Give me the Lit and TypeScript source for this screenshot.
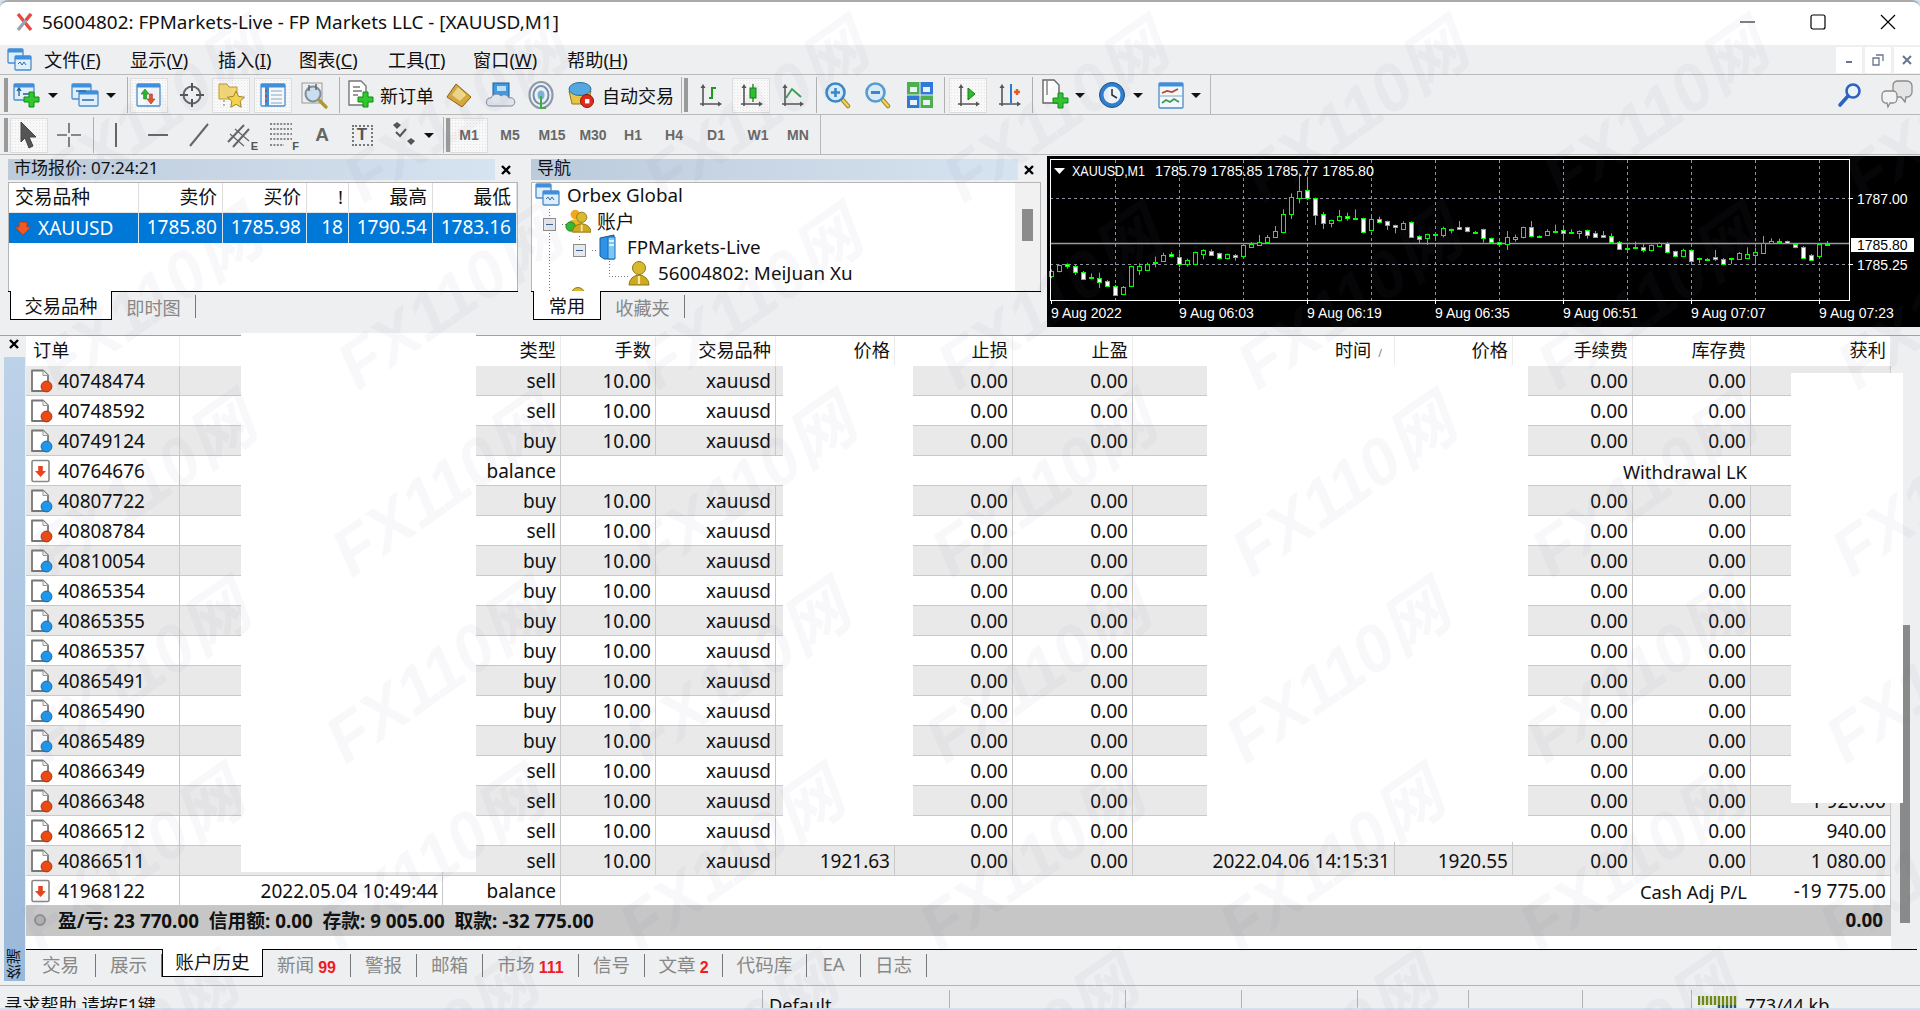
import { LitElement, html, css, svg, nothing } from 'lit';
import { customElement } from 'lit/decorators.js';

// ---- icons ----
const ic = (w: number, h: number, body: unknown) =>
  html`<svg width=${w} height=${h} viewBox="0 0 ${w} ${h}">${body}</svg>`;

const plus = (x: number, y: number) => svg`
  <path d="M${x + 5} ${y}h5v5h5v5h-5v5h-5v-5h-5v-5h5z" fill="#2fc82f" stroke="#128a12" stroke-width="1"/>`;

const miniWin = (x: number, y: number, w: number, h: number, fill = '#dfeefb') => svg`
  <rect x=${x} y=${y} width=${w} height=${h} rx="1" fill=${fill} stroke="#4a8ccb" stroke-width="1.3"/>
  <rect x=${x} y=${y} width=${w} height="3.5" fill="#3f8fdc"/>`;

const axes = (x = 4, y = 3) => svg`
  <g stroke="#555" stroke-width="1.6" fill="#555">
    <path d="M${x + 3} ${y + 3}V${y + 22}M${x} ${y + 20}H${x + 20}" fill="none"/>
    <path d="M${x + 3} ${y}l-2.5 4h5z" stroke="none"/>
    <path d="M${x + 22} ${y + 20}l-4 -2.5v5z" stroke="none"/>
  </g>`;

const mag = (color: string, inner: unknown) => ic(28, 28, svg`
  <path d="M17 17l7 8" stroke="#a58a22" stroke-width="4.5" stroke-linecap="round"/>
  <path d="M17 17l7 8" stroke="#ecd35a" stroke-width="2.4" stroke-linecap="round"/>
  <circle cx="11.5" cy="11.5" r="9" fill="#d8ecf8" stroke=${color} stroke-width="2.6"/>
  ${inner}`);

const icons = {
  newChart: () => ic(30, 28, svg`${miniWin(2, 3, 20, 16)}
    <path d="M7 8v7M5 10l2-3 2 3M11 13h7" stroke="#1f5f8f" stroke-width="1.3" fill="none"/>${plus(12, 11)}`),
  profile: () => ic(30, 28, svg`${miniWin(2, 3, 19, 15)}${miniWin(9, 10, 19, 15)}
    <path d="M6 10h10M12 19h12" stroke="#2b6ea5" stroke-width="1.3"/>`),
  market: () => ic(28, 28, svg`${miniWin(2, 3, 23, 22, '#f4f9fd')}
    <path d="M10 8l-4 5h2.6v5h3v-5H14z" fill="#2bb52b" stroke="#157a15" stroke-width=".6"/>
    <path d="M16 23l4-5h-2.6v-5h-3v5H12z" fill="#e8542a" stroke="#a53312" stroke-width=".6"/>`),
  target: () => ic(28, 28, svg`
    <circle cx="14" cy="14" r="8.5" fill="none" stroke="#666" stroke-width="2"/>
    <path d="M14 2v8M14 18v8M2 14h8M18 14h8" stroke="#555" stroke-width="2"/>`),
  navStar: () => ic(30, 30, svg`
    <path d="M3 4h8l2 3h8v12H3z" fill="#f4d774" stroke="#b89b32"/>
    <path d="M20 11l2.6 5.4 5.9.8-4.3 4.1 1 5.9-5.2-2.8-5.2 2.8 1-5.9-4.3-4.1 5.9-.8z" fill="#f2d24e" stroke="#9c8526"/>
    <path d="M8 20v8" stroke="#777" stroke-dasharray="2 2"/>`),
  terminal: () => ic(28, 28, svg`${miniWin(2, 3, 24, 22, '#f6f8fb')}
    <path d="M8 6v19" stroke="#3f8fdc" stroke-width="4"/>
    <path d="M12 10h11M12 14h11M12 18h11M12 22h11" stroke="#8aa6c4" stroke-width="1.2"/>
    <path d="M6 10h2M6 15h2M6 20h2" stroke="#d33" stroke-width="1.4"/>`),
  tester: () => ic(30, 30, svg`
    <rect x="3" y="3" width="20" height="20" fill="#eee" stroke="#999"/>
    <circle cx="14" cy="14" r="7.5" fill="#c9deee" stroke="#7d8ea0" stroke-width="2"/>
    <path d="M10 5v6M17 4v6" stroke="#666" stroke-width="1.5"/>
    <path d="M20 20l7 7" stroke="#b5962a" stroke-width="3.4" stroke-linecap="round"/>`),
  newOrder: () => ic(30, 32, svg`
    <path d="M3 2h12l5 5v19H3z" fill="#fff" stroke="#777" stroke-width="1.4"/>
    <path d="M7 8h7M7 12h9M7 16h5" stroke="#777" stroke-width="1.3"/>${plus(12, 13)}`),
  gold: () => ic(28, 26, svg`
    <path d="M2 15L11 2l15 13-9 10z" fill="#d8a93a" stroke="#85631a"/>
    <path d="M7 13l6-8 8 8-6 6z" fill="#f3d98a"/>`),
  cloud: () => ic(30, 28, svg`
    <rect x="7" y="2" width="16" height="18" fill="#3f9ae6" stroke="#1d5f9e"/>
    <rect x="11" y="5" width="9" height="5" fill="#bfe3fb"/>
    <path d="M4 25a4 4 0 0 1 1-8 6 6 0 0 1 10-2 5 5 0 0 1 8 2 4 4 0 0 1 3 8z" fill="#dfe3ea" stroke="#7d8798"/>`),
  radar: () => ic(28, 30, svg`
    <ellipse cx="14" cy="15" rx="11.5" ry="13" fill="none" stroke="#8d99a8" stroke-width="2.2"/>
    <ellipse cx="14" cy="15" rx="7.5" ry="9" fill="none" stroke="#6f8fb0" stroke-width="2"/>
    <ellipse cx="14" cy="15" rx="3.5" ry="4.5" fill="#7fb0d8"/>
    <path d="M14 16v12h5" fill="none" stroke="#3fae3f" stroke-width="2"/>`),
  auto: () => ic(30, 30, svg`
    <path d="M3 11h22l-3 13H6z" fill="#e6c544" stroke="#93791c"/>
    <ellipse cx="14" cy="9" rx="11" ry="6.5" fill="#55a7e0" stroke="#2a6f9f"/>
    <circle cx="21" cy="21" r="6.5" fill="#e02a1d" stroke="#8f160e"/>
    <rect x="19" y="19" width="4.4" height="4.4" fill="#fff"/>`),
  bars: () => ic(28, 28, svg`${axes()}<path d="M16 6v12M16 7h4M13 17h3" stroke="#1c9a1c" stroke-width="2" fill="none"/>`),
  candles: () => ic(28, 28, svg`${axes()}
    <path d="M16 3v18" stroke="#1c8a1c" stroke-width="1.4"/><rect x="13" y="7" width="6" height="10" fill="#27c227" stroke="#167c16"/>`),
  line: () => ic(28, 28, svg`${axes()}<path d="M8 17l6-9 9 8" fill="none" stroke="#3a9a55" stroke-width="1.8"/>`),
  zoomIn: () => mag('#3e87c6', svg`<path d="M11.5 7v9M7 11.5h9" stroke="#3e87c6" stroke-width="2.6"/>`),
  zoomOut: () => mag('#5a9bd0', svg`<path d="M7 11.5h9" stroke="#3e87c6" stroke-width="2.8"/>`),
  tile: () => ic(28, 28, svg`
    <rect x="1" y="1" width="12.5" height="12.5" fill="#4cb04c"/><rect x="14.5" y="1" width="12.5" height="12.5" fill="#2f79d8"/>
    <rect x="1" y="14.5" width="12.5" height="12.5" fill="#2f79d8"/><rect x="14.5" y="14.5" width="12.5" height="12.5" fill="#4cb04c"/>
    <path d="M4 6h7v5H4zM17 6h7v5h-7zM4 19h7v5H4zM17 19h7v5h-7z" fill="#e9f2f8"/>`),
  scroll: () => ic(28, 28, svg`${axes()}<path d="M14 7l7 6-7 6z" fill="#2cbd2c" stroke="#167c16"/>`),
  shift: () => ic(28, 28, svg`${axes()}
    <path d="M16 3v19" stroke="#2f79c8" stroke-width="2"/><path d="M19 11h6M22 8v6" stroke="#e25a24" stroke-width="2.4"/>`),
  indicators: () => ic(30, 34, svg`
    <path d="M2 2h11l5 5v18H2z" fill="#fff" stroke="#666" stroke-width="1.4"/>
    <path d="M6 3v14" stroke="#666" stroke-width="1.2"/>${plus(12, 15)}`),
  clock: () => ic(28, 30, svg`
    <circle cx="14" cy="15" r="12.5" fill="#2f7fd0" stroke="#1c4f88"/>
    <circle cx="14" cy="15" r="8.5" fill="#eef3f8"/>
    <path d="M14 9v6l5 3" fill="none" stroke="#333" stroke-width="1.6"/>`),
  template: () => ic(28, 28, svg`${miniWin(2, 2, 24, 25, '#f3f6fa')}
    <path d="M5 12l5-2 5 1 6-3" fill="none" stroke="#b6482a" stroke-width="1.7"/>
    <path d="M2 15h24" stroke="#8aa6c4"/>
    <path d="M5 22l4-3 4 2 4-3 5 3" fill="none" stroke="#3a9a55" stroke-width="1.7"/>`),
  search: () => ic(26, 28, svg`
    <circle cx="16" cy="10" r="6.5" fill="#e9f3fb" stroke="#2e62c0" stroke-width="2.6"/>
    <path d="M11 15l-8 9" stroke="#2e62c0" stroke-width="3.6" stroke-linecap="round"/>`),
  chat: () => ic(34, 30, svg`
    <path d="M13 5a5 5 0 0 1 5-4h9a5 5 0 0 1 5 5v6a5 5 0 0 1-5 5h-1l-1 5-4-5h-3a5 5 0 0 1-5-5z" fill="#e4e4e4" stroke="#8b8b8b" stroke-width="1.3"/>
    <path d="M2 15a4 4 0 0 1 4-4h7a4 4 0 0 1 4 4v4a4 4 0 0 1-4 4h-3l-2 4-1-4a4 4 0 0 1-5-4z" fill="#f2f2f2" stroke="#8b8b8b" stroke-width="1.3"/>`),
  cursor: () => ic(22, 30, svg`<path d="M3 2l15 15h-7l4 9-4 2-4-10-4 4z" fill="#555" stroke="#444"/>`),
  cross: () => ic(26, 26, svg`<path d="M13 1v10M13 15v10M1 13h10M15 13h10" stroke="#666" stroke-width="1.6"/>`),
  vline: () => ic(10, 28, svg`<path d="M5 2v24" stroke="#666" stroke-width="2"/>`),
  hline: () => ic(24, 10, svg`<path d="M2 5h20" stroke="#666" stroke-width="2"/>`),
  trend: () => ic(24, 26, svg`<path d="M3 24L21 2" stroke="#666" stroke-width="2"/>`),
  channel: () => html`<span class="with-tag">${ic(26, 26, svg`
    <path d="M2 20L18 3M7 25L23 7" stroke="#666" stroke-width="2"/><path d="M4 12l14 12M9 7l14 12" stroke="#666" stroke-width="1.2"/>`)}<b>E</b></span>`,
  fib: () => html`<span class="with-tag">${ic(24, 26, svg`
    <path d="M1 2h22M1 7h22M1 12h22M1 17h22M1 23h14" stroke="#666" stroke-width="1.6" stroke-dasharray="2 1.4"/>`)}<b>F</b></span>`,
  textBox: () => html`<span class="tbox">T</span>`,
  arrows: () => ic(28, 28, svg`
    <path d="M3 4l4-3 4 3-4 4z" fill="#555"/><path d="M17 20l4-3 4 3-4 4z" fill="#555"/>
    <path d="M6 11l4 4 6-7" fill="none" stroke="#555" stroke-width="2"/>`),
  orbex: () => ic(26, 24, svg`${miniWin(1, 1, 15, 14)}${miniWin(8, 8, 16, 14)}
    <path d="M11 16l2-2 2 3 2-3 2 3" fill="none" stroke="#2b6ea5"/>`),
  people: () => ic(28, 26, svg`
    <circle cx="11" cy="6" r="5" fill="#f2a81d"/><path d="M2 20a9 9 0 0 1 18 0z" fill="#e6b62b"/>
    <circle cx="6" cy="19" r="5" fill="#34b934" stroke="#1d7c1d"/>
    <circle cx="18" cy="9" r="5.5" fill="#d9b92f" stroke="#8f7610"/>
    <path d="M8 25a10 9 0 0 1 20 0z" fill="#cfa91f" stroke="#8f7610"/>
    <path d="M18 17v7" stroke="#f6e7a8" stroke-width="2"/>`),
  server: () => ic(20, 26, svg`
    <path d="M2 4l14-3v24L6 25l-4-3z" fill="#2e93e6" stroke="#125a9e"/>
    <path d="M10 3h7v22h-7z" fill="#7cc7f6" stroke="#1b6cb0"/>
    <path d="M11 7h5M11 11h5" stroke="#fff" stroke-width="1.4"/>`),
  person: () => ic(24, 26, svg`
    <circle cx="12" cy="8" r="6.5" fill="#d9b92f" stroke="#8f7610"/>
    <path d="M2 25a10 10 0 0 1 20 0z" fill="#cfa91f" stroke="#8f7610"/>
    <path d="M12 16v8" stroke="#f6e7a8" stroke-width="2.2"/>`),
};

const docIcon = (blue: boolean) => ic(23, 24, svg`
  <path d="M2 1.5h11l5 5v15.5H2z" fill="#fff" stroke="#777" stroke-width="1.8" stroke-linejoin="round"/>
  <path d="M13 1.5v5h5" fill="#eee" stroke="#999"/>
  <circle cx="16.5" cy="17.5" r="5.4" fill=${blue ? '#1f96e8' : '#ea4a13'} stroke=${blue ? '#1768a8' : '#a93110'}/>`);

const balIcon = () => ic(23, 24, svg`
  <rect x="2" y="1.5" width="17" height="21" rx="1.5" fill="#fff" stroke="#888" stroke-width="1.6"/>
  <path d="M10.5 18l-5.5-6h3.2V7h4.6v5H16z" fill="#e8431f"/>`);

const caret = () => html`<i class="caret"></i>`;

const closeX = () => ic(12, 12, svg`<path d="M2 2l8 8M10 2l-8 8" stroke="#000" stroke-width="2.4"/>`);

// ---- toolbars: each item has a centre x, laid out in flow ----
type TbItem = { c: number; w?: number; t?: unknown; on?: boolean; sep?: boolean; grip?: boolean; drop?: boolean; label?: string; tf?: string };

const TB1: TbItem[] = [
  { c: 6, grip: true },
  { c: 27, t: icons.newChart() }, { c: 53, w: 12, drop: true },
  { c: 85, t: icons.profile() }, { c: 111, w: 12, drop: true },
  { c: 127, sep: true },
  { c: 149, t: icons.market(), on: true }, { c: 192, t: icons.target() },
  { c: 231, t: icons.navStar(), on: true }, { c: 273, t: icons.terminal(), on: true },
  { c: 314, t: icons.tester() }, { c: 339, sep: true },
  { c: 361, w: 32, t: icons.newOrder() }, { c: 408, w: 56, label: '新订单' },
  { c: 459, t: icons.gold() }, { c: 501, t: icons.cloud() }, { c: 541, t: icons.radar() },
  { c: 581, t: icons.auto() }, { c: 639, w: 74, label: '自动交易' },
  { c: 681, sep: true }, { c: 686, grip: true },
  { c: 710, t: icons.bars() }, { c: 751, t: icons.candles(), on: true }, { c: 792, t: icons.line() },
  { c: 816, sep: true },
  { c: 838, t: icons.zoomIn() }, { c: 878, t: icons.zoomOut() }, { c: 920, t: icons.tile() },
  { c: 944, sep: true },
  { c: 968, t: icons.scroll(), on: true }, { c: 1009, t: icons.shift() },
  { c: 1032, sep: true },
  { c: 1056, t: icons.indicators() }, { c: 1080, w: 12, drop: true },
  { c: 1112, t: icons.clock() }, { c: 1138, w: 12, drop: true },
  { c: 1171, t: icons.template() }, { c: 1196, w: 12, drop: true },
];

const TB2: TbItem[] = [
  { c: 6, grip: true },
  { c: 29, t: icons.cursor(), on: true }, { c: 69, t: icons.cross() },
  { c: 93, sep: true },
  { c: 116, t: icons.vline() }, { c: 158, t: icons.hline() }, { c: 199, t: icons.trend() },
  { c: 239, t: icons.channel() }, { c: 281, t: icons.fib() },
  { c: 322, label: 'A', tf: 'big' }, { c: 362, t: icons.textBox() }, { c: 404, t: icons.arrows() },
  { c: 429, w: 12, drop: true },
  { c: 443, sep: true }, { c: 448, grip: true },
  { c: 469, label: 'M1', tf: 'tf', on: true }, { c: 510, label: 'M5', tf: 'tf' }, { c: 552, label: 'M15', tf: 'tf' },
  { c: 593, label: 'M30', tf: 'tf' }, { c: 633, label: 'H1', tf: 'tf' }, { c: 674, label: 'H4', tf: 'tf' },
  { c: 716, label: 'D1', tf: 'tf' }, { c: 758, label: 'W1', tf: 'tf' }, { c: 798, label: 'MN', tf: 'tf' },
];

const MENU = [
  ['文件(', 'F', ')', 86], ['显示(', 'V', ')', 88], ['插入(', 'I', ')', 81], ['图表(', 'C', ')', 89],
  ['工具(', 'T', ')', 85], ['窗口(', 'W', ')', 94], ['帮助(', 'H', ')', 70],
] as const;

// ---- chart data, [top, bottom, high, low, bullish] in zoomed y units (y / 3 + 150) ----
const CANDLES: [number, number, number, number, number][] = [
  [362, 378, 358, 385, 1], [346, 365, 344, 367, 1], [343, 349, 340, 356, 0], [349, 368, 345, 375, 0],
  [365, 386, 363, 388, 0], [382, 386, 370, 388, 0], [383, 396, 368, 414, 0], [394, 410, 390, 411, 0],
  [408, 435, 404, 437, 0], [410, 431, 408, 435, 1], [349, 410, 347, 411, 1], [349, 362, 340, 375, 1],
  [341, 358, 338, 360, 1], [336, 340, 320, 352, 1], [316, 333, 308, 335, 1], [313, 320, 306, 322, 0],
  [322, 342, 310, 352, 0], [330, 343, 326, 350, 1], [307, 342, 305, 344, 1], [300, 311, 298, 328, 1],
  [302, 313, 298, 315, 0], [310, 326, 308, 328, 0], [313, 326, 311, 328, 1], [314, 321, 312, 332, 0],
  [286, 320, 284, 322, 1], [282, 290, 276, 292, 1], [275, 284, 255, 286, 1], [261, 275, 255, 277, 1],
  [244, 261, 228, 263, 1], [193, 247, 178, 250, 1], [142, 193, 130, 207, 1], [124, 144, 70, 160, 1],
  [120, 145, 80, 150, 0], [145, 196, 143, 225, 0], [193, 220, 186, 237, 0], [211, 220, 209, 232, 1],
  [199, 212, 180, 214, 1], [199, 204, 188, 212, 0], [205, 207, 178, 209, 0], [205, 248, 203, 250, 0],
  [208, 242, 200, 244, 1], [208, 218, 200, 220, 0], [214, 226, 212, 240, 0], [226, 233, 224, 250, 0],
  [218, 237, 214, 239, 1], [216, 260, 214, 262, 0], [258, 266, 256, 280, 0], [253, 265, 251, 285, 1],
  [252, 256, 250, 268, 1], [234, 254, 230, 262, 1], [238, 242, 236, 250, 1], [231, 236, 213, 238, 0],
  [232, 245, 230, 247, 0], [245, 247, 243, 249, 0], [238, 265, 236, 278, 0], [265, 277, 263, 279, 0],
  [277, 284, 275, 288, 0], [262, 284, 243, 300, 1], [260, 267, 254, 275, 1], [232, 263, 230, 265, 1],
  [232, 260, 213, 262, 0], [258, 261, 256, 263, 0], [243, 256, 238, 258, 1], [243, 247, 224, 249, 0],
  [240, 248, 226, 268, 0], [246, 248, 238, 252, 0], [243, 248, 241, 266, 1], [241, 255, 239, 266, 0],
  [249, 260, 243, 262, 0], [254, 260, 243, 262, 0], [259, 277, 250, 279, 0], [275, 296, 273, 300, 0],
  [293, 296, 278, 302, 0], [292, 295, 275, 297, 0], [292, 302, 280, 307, 0], [286, 302, 284, 304, 1],
  [279, 289, 277, 291, 1], [278, 305, 276, 310, 0], [304, 319, 302, 321, 0], [300, 318, 296, 320, 1],
  [300, 332, 298, 334, 0], [325, 327, 323, 340, 0], [326, 328, 324, 332, 0], [320, 325, 300, 333, 0],
  [326, 340, 324, 345, 0], [325, 328, 323, 342, 0], [310, 328, 306, 330, 1], [311, 322, 292, 324, 1],
  [306, 314, 293, 340, 1], [278, 307, 258, 309, 1], [272, 279, 265, 281, 1], [272, 275, 266, 277, 0],
  [274, 279, 272, 281, 0], [283, 293, 281, 295, 0], [290, 324, 288, 326, 0], [314, 328, 312, 331, 0],
  [283, 320, 281, 322, 1], [281, 284, 273, 286, 1],
];

const GRID_X = [1115, 1179, 1243, 1307, 1371, 1435, 1499, 1563, 1627, 1691, 1755, 1819];
const TIME_LABELS: [number, string][] = [
  [1051, '9 Aug 2022'], [1179, '9 Aug 06:03'], [1307, '9 Aug 06:19'], [1435, '9 Aug 06:35'],
  [1563, '9 Aug 06:51'], [1691, '9 Aug 07:07'], [1819, '9 Aug 07:23'],
];

// ---- table data ----
type Row = { id: string; type: string; sym?: string; blue?: boolean; note?: string; profit?: string; time?: string; p1?: string; t2?: string; p2?: string };
const o = (id: string, type: string, extra: Partial<Row> = {}): Row => ({ id, type, sym: 'xauusd', blue: type === 'buy', ...extra });

const ROWS: Row[] = [
  o('40748474', 'sell'), o('40748592', 'sell'), o('40749124', 'buy'),
  { id: '40764676', type: 'balance', note: 'Withdrawal LK' },
  o('40807722', 'buy'), o('40808784', 'sell'), o('40810054', 'buy'), o('40865354', 'buy'),
  o('40865355', 'buy'), o('40865357', 'buy'), o('40865491', 'buy'), o('40865490', 'buy'),
  o('40865489', 'buy'), o('40866349', 'sell'), o('40866348', 'sell', { profit: '1 920.00' }),
  o('40866512', 'sell', { profit: '940.00' }),
  o('40866511', 'sell', { p1: '1921.63', t2: '2022.04.06 14:15:31', p2: '1920.55', profit: '1 080.00' }),
  { id: '41968122', type: 'balance', time: '2022.05.04 10:49:44', note: 'Cash Adj P/L', profit: '-19 775.00' },
];

const HEAD = ['订单', '', '类型', '手数', '交易品种', '价格', '止损', '止盈', '时间', '价格', '手续费', '库存费', '获利'];

const TABS: { label: string; w: number; badge?: string; active?: boolean }[] = [
  { label: '交易', w: 70 }, { label: '展示', w: 66 }, { label: '账户历史', w: 101, active: true },
  { label: '新闻', w: 88, badge: '99' }, { label: '警报', w: 66 }, { label: '邮箱', w: 66 },
  { label: '市场', w: 96, badge: '111' }, { label: '信号', w: 66 }, { label: '文章', w: 78, badge: '2' },
  { label: '代码库', w: 84 }, { label: 'EA', w: 54 }, { label: '日志', w: 66 },
];

const STATUS_W = [762, 187, 176, 116, 116, 111, 114, 109, 229];

@customElement('app-root')
export class AppRoot extends LitElement {
  static styles = css`
    :host {
      display: block;
      position: relative;
      width: 1920px;
      height: 1010px;
      overflow: hidden;
      background: #cfe1ef;
      font-family: 'Noto Sans', 'Noto Sans CJK SC', sans-serif;
      color: #111;
    }
    .window {
      height: 1008px;
      display: flex;
      flex-direction: column;
      background: #eeeff0;
      border-radius: 8px 8px 0 0;
      border-top: 2px solid #a9a9a9;
      box-sizing: border-box;
      overflow: hidden;
      position: relative;
    }
    .accent {
      position: absolute;
      left: 0;
      top: -2px;
      width: 88px;
      height: 2px;
      background: #5576d2;
    }
    .title {
      height: 43px;
      flex: none;
      background: #fff;
      display: flex;
      align-items: center;
      font-size: 18.9px;
      padding: 0 0 3px 15px;
      box-sizing: border-box;
    }
    .title .name { margin-left: 7px; white-space: nowrap; }
    .caps { margin-left: auto; display: flex; align-items: center; padding-right: 24px; gap: 54px; }
    .menu {
      height: 30px;
      flex: none;
      display: flex;
      align-items: center;
      font-size: 18.2px;
      border-bottom: 1px solid #b9b9b9;
      box-sizing: border-box;
      position: relative;
      padding-left: 7px;
    }
    .menu .logo { width: 37px; flex: none; display: flex; }
    .menu span { flex: none; white-space: nowrap; padding-bottom: 2px; }
    .mdi { margin-left: auto; display: flex; gap: 3px; }
    .mdi i {
      width: 26px;
      height: 26px;
      background: #fff;
      display: flex;
      align-items: center;
      justify-content: center;
    }
    .tb {
      height: 40px;
      flex: none;
      display: flex;
      align-items: center;
      box-sizing: border-box;
      padding-top: 1px;
      border-bottom: 1px solid #b9b9b9;
      position: relative;
    }
    .tb .end { position: absolute; top: 0; bottom: 0; border-right: 1px solid #b9b9b9; }
    .btn {
      flex: none;
      height: 35px;
      width: 38px;
      box-sizing: border-box;
      display: flex;
      align-items: center;
      justify-content: center;
      white-space: nowrap;
    }
    .btn.on {
      background: #f8f8f8;
      border: 1px solid #dcdcdc;
      background-image: radial-gradient(#e4e4e4 0.6px, transparent 0.7px);
      background-size: 3px 3px;
    }
    .btn.text { font-size: 18px; justify-content: flex-start; }
    .btn.tf { font: bold 14px 'Liberation Sans', sans-serif; color: #686868; }
    .btn.big { font: bold 19px 'Liberation Sans', sans-serif; color: #666; }
    .sep { flex: none; width: 1px; height: 36px; background: #b0b0b0; }
    .grip {
      flex: none;
      width: 4px;
      height: 34px;
      background-image: radial-gradient(#9a9a9a 0.8px, transparent 0.9px);
      background-size: 2px 2px;
    }
    .caret {
      width: 0;
      height: 0;
      border-left: 5px solid transparent;
      border-right: 5px solid transparent;
      border-top: 5px solid #111;
    }
    .right-tools { position: absolute; right: 6px; top: 0; bottom: 0; display: flex; align-items: center; gap: 17px; }
    .with-tag { position: relative; display: inline-flex; }
    .with-tag b {
      position: absolute;
      right: -6px;
      bottom: -4px;
      font: bold 11px 'Liberation Sans', sans-serif;
      color: #555;
    }
    .tbox {
      width: 21px;
      height: 21px;
      border: 2px dotted #777;
      box-sizing: border-box;
      display: flex;
      align-items: center;
      justify-content: center;
      font: bold 17px 'Liberation Sans', sans-serif;
      color: #555;
    }

    .panels { height: 180px; flex: none; display: flex; padding-top: 1px; box-sizing: border-box; }
    .pane { flex: none; margin-top: 3px; height: 164px; display: flex; flex-direction: column; }
    .pane.mw { width: 510px; margin-left: 8px; }
    .pane.nav { width: 510px; margin-left: 13px; }
    .pane-head { height: 21px; flex: none; display: flex; margin-bottom: 2px; }
    .pane-title {
      flex: 1;
      padding-left: 6px;
      font-size: 17px;
      line-height: 18px;
      background: linear-gradient(90deg, #bccbdb, #d6e3f0);
    }
    .pane-x { width: 22px; flex: none; margin-right: 1px; display: flex; align-items: center; justify-content: center; }
    .pane-body {
      height: 109px;
      flex: none;
      box-sizing: border-box;
      background: #fff;
      border: 1px solid #b5b5b5;
      border-bottom: none;
      overflow: hidden;
      position: relative;
    }
    .mw-row { display: grid; grid-template-columns: 130px 84px 84px 42px 84px 84px; height: 30px; font-size: 18.8px; line-height: 29px; }
    .mw-row > div { text-align: right; padding-right: 5px; border-right: 1px solid #dedede; border-bottom: 1px solid #e6e6e6; white-space: nowrap; }
    .mw-row > div:first-child { text-align: left; padding-left: 6px; }
    .mw-row.sel { background: #0078d7; color: #fff; font-size: 19px; }
    .mw-row.sel > div { border-color: #d8e6f2; border-bottom: none; }
    .mw-row.sel > div:first-child { display: flex; align-items: center; gap: 6px; padding-left: 5px; }

    .ptabs {
      height: 30px;
      flex: none;
      display: flex;
      border-top: 1px solid #000;
      font-size: 18.2px;
      padding-left: 2px;
      box-sizing: border-box;
      color: #888;
    }
    .ptab {
      flex: none;
      display: flex;
      align-items: center;
      justify-content: center;
      height: 23px;
      margin-top: 3px;
      border-right: 1px solid #777;
      box-sizing: border-box;
    }
    .ptab.active {
      background: #fff;
      color: #111;
      border: 1px solid #000;
      border-top: none;
      height: 29px;
      margin-top: -1px;
    }

    .tree-row { height: 26px; box-sizing: border-box; padding-bottom: 2px; display: flex; align-items: center; font-size: 18.8px; white-space: nowrap; }
    .tree-row .ti { width: 26px; flex: none; display: flex; justify-content: center; margin-right: 6px; }
    .lv0 { padding-left: 3px; }
    .lv1 { padding-left: 33px; }
    .lv2 { padding-left: 63px; }
    .lv3 { padding-left: 94px; }
    .tree-lines { position: absolute; left: 0; top: 0; pointer-events: none; }
    .vscroll { position: absolute; right: 0; top: 0; bottom: 0; width: 25px; background: #f1f1f1; display: flex; justify-content: center; }
    .vscroll i { width: 11px; height: 32px; margin-top: 26px; background: #8c8c8c; }

    .chart { flex: none; width: 873px; height: 171px; margin-left: 6px; background: #000; }
    .chart svg { display: block; }
    .chart text { font-family: 'Liberation Sans', sans-serif; font-size: 14px; fill: #fff; }
    .chart text.dark { fill: #000; }

    .term { flex: 1; display: flex; min-height: 0; border-top: 1px solid #a2a2a2; margin-top: 0; position: relative; }
    .side { width: 26px; flex: none; display: flex; flex-direction: column; align-items: stretch; }
    .side .x { height: 21px; box-sizing: border-box; display: flex; align-items: center; justify-content: center; padding: 0 0 6px 2px; }
    .side .strip {
      flex: 1;
      margin-left: 4px;
      margin-right: 1px;
      background: linear-gradient(180deg, #bcd2e9, #9ab8d9);
      display: flex;
      align-items: flex-end;
      justify-content: center;
      font-size: 15px;
      line-height: 21px;
    }
    .side .strip span { writing-mode: vertical-rl; transform: rotate(180deg); padding-top: 2px; }
    .main { flex: 1; display: flex; flex-direction: column; min-width: 0; }
    .upper { display: flex; flex: none; height: 613px; }
    .table { width: 1865px; flex: none; background: #fff; }
    .scroll { flex: 1; position: relative; display: flex; justify-content: flex-start; }
    .scroll i { width: 10px; height: 298px; margin: 289px 0 0 9px; background: #8a8a8a; }
    .trow {
      display: grid;
      grid-template-columns: 154px 263px 118px 95px 120px 119px 118px 120px 262px 118px 120px 118px 140px;
      height: 30px;
      font-size: 19px;
      line-height: 31px;
      box-sizing: border-box;
      border-bottom: 1px solid #c9c9c9;
    }
    .trow.shade { background: #e9e9e9; }
    .trow > div { box-sizing: border-box; padding-right: 4px; text-align: right; border-right: 1px solid #c9c9c9; white-space: nowrap; min-width: 0; overflow: visible; height: 29px; }
    .trow > div.wide { border-right: none; font-size: 18.4px; }
    .trow > div.first { text-align: left; display: flex; align-items: center; gap: 5px; padding-left: 4px; }
    .trow > div.first span { padding-top: 1px; }
    .trow.head { border-bottom: none; height: 30px; font-size: 18.2px; line-height: 29px; }
    .trow.head > div { border-right-color: #ececec; }
    .trow.head > div.first { padding-left: 7px; }
    .sort { font-size: 10px; color: #777; margin: 0 8px 0 7px; display: inline-block; }
    .sum {
      height: 30px;
      box-sizing: border-box;
      background: #c6c6c6;
      font-weight: 700;
      font-size: 18.8px;
      display: flex;
      align-items: center;
      padding: 0 8px 2px 8px;
      white-space: pre;
    }
    .sum .dot {
      width: 12px;
      height: 12px;
      border-radius: 50%;
      background: #b0b0b0;
      border: 2px solid #8f8f8f;
      box-sizing: border-box;
      margin-right: 12px;
    }
    .sum .total { margin-left: auto; }
    .gap { height: 13px; background: #fff; width: 1865px; }
    .btabs {
      height: 31px;
      flex: none;
      display: flex;
      border-top: 1px solid #000;
      margin-right: 3px;
      font-size: 18.6px;
      color: #888;
      box-sizing: border-box;
    }
    .btab {
      flex: none;
      height: 23px;
      margin-top: 4px;
      padding-bottom: 4px;
      display: flex;
      align-items: center;
      justify-content: center;
      border-right: 1px solid #777;
      box-sizing: border-box;
    }
    .btab b { font: bold 16px 'Liberation Sans', sans-serif; color: #ef1c25; margin: 8px 0 0 4px; }
    .btab.active {
      background: #fff;
      color: #111;
      border: 1px solid #000;
      border-top: none;
      height: 28px;
      margin-top: -1px;
    }
    .status {
      height: 23px;
      flex: none;
      display: flex;
      border-top: 1px solid #b4b4b4;
      margin-top: 4px;
      overflow: hidden;
      font-size: 18.2px;
      line-height: 22px;
      box-sizing: border-box;
    }
    .status > div { flex: none; box-sizing: border-box; border-left: 1px solid #b4b4b4; margin-top: 4px; padding: 4px 0 0 6px; height: 40px; white-space: nowrap; display: flex; gap: 7px; }
    .status > div:first-child { border-left: none; padding-left: 4px; }
    .status .conn { display: inline-flex; align-self: flex-start; margin-top: 2px; }

    /* white rectangles painted over the private columns */
    .mask { position: absolute; background: #fff; }
    .m1 { left: 241px; top: 333px; width: 235px; height: 539px; }
    .m2 { left: 783px; top: 366px; width: 130px; height: 479px; }
    .m3 { left: 1207px; top: 365px; width: 321px; height: 477px; }
    .m4 { left: 1791px; top: 373px; width: 112px; height: 430px; }
    .wm { position: absolute; left: 0; top: 0; pointer-events: none; }
    .wm text { font: italic bold 66px 'Liberation Sans', 'Noto Sans CJK SC', sans-serif; fill: rgba(110, 125, 150, 0.05); }
  `;

  private toolbar(items: TbItem[]) {
    let right = 0;
    return items.map((it) => {
      const w = it.sep ? 1 : it.grip ? 4 : it.w ?? 38;
      const left = it.c - w / 2;
      const ml = left - right;
      right = left + w;
      const st = `margin-left:${ml}px;width:${w}px`;
      if (it.sep) return html`<div class="sep" style=${st}></div>`;
      if (it.grip) return html`<div class="grip" style=${st}></div>`;
      const cls = `btn ${it.on ? 'on' : ''} ${it.tf ?? (it.label ? 'text' : '')}`;
      return html`<div class=${cls} style=${st}>${it.drop ? caret() : it.label ?? it.t}</div>`;
    });
  }

  private chart() {
    const yy = (v: number) => v / 3 + 150;
    return html`<div class="chart">
      <svg width="873" height="171" viewBox="1047 156 873 171">
        <g stroke="#8c939c" stroke-width="1" stroke-dasharray="3 3">
          ${GRID_X.map((x) => svg`<line x1=${x + 0.5} x2=${x + 0.5} y1="160" y2="300"></line>`)}
          <line x1="1050" x2="1849" y1="198.5" y2="198.5"></line>
          <line x1="1050" x2="1849" y1="264.5" y2="264.5"></line>
        </g>
        <line x1="1050" x2="1849" y1="243.5" y2="243.5" stroke="#9a9a9a" stroke-width="1.4"></line>
        <g stroke="#00ff00" stroke-width="1">
          ${CANDLES.map(([t, b, h, l, bull], i) => {
            const x = Math.round(1051 + 8 * i) + 0.5;
            const top = Math.round(yy(t)) + 0.5;
            const hgt = Math.max(1, Math.round(yy(b) - yy(t)));
            return svg`
              <line x1=${x} x2=${x} y1=${yy(h)} y2=${yy(l)}></line>
              <rect x=${x - 2} y=${top} width="4" height=${hgt} fill=${bull ? '#000' : '#fff'}></rect>`;
          })}
        </g>
        <rect x="1050.5" y="159.5" width="799" height="141" fill="none" stroke="#fff"></rect>
        <path d="M1054 168h11l-5.5 6z" fill="#fff"></path>
        <text x="1072" y="176" textLength="73" lengthAdjust="spacingAndGlyphs">XAUUSD,M1</text>
        <text x="1155" y="176" textLength="219" lengthAdjust="spacingAndGlyphs">1785.79 1785.85 1785.77 1785.80</text>
        ${TIME_LABELS.map(([x, s]) => svg`
          <line x1=${x + 0.5} x2=${x + 0.5} y1="300" y2="304" stroke="#fff"></line>
          <text x=${x} y="318">${s}</text>`)}
        <line x1="1849" x2="1853" y1="198.5" y2="198.5" stroke="#fff"></line>
        <line x1="1849" x2="1853" y1="264.5" y2="264.5" stroke="#fff"></line>
        <text x="1857" y="204">1787.00</text>
        <text x="1857" y="270">1785.25</text>
        <rect x="1851" y="238" width="63" height="14" fill="#fff"></rect>
        <text class="dark" x="1857" y="250">1785.80</text>
      </svg>
    </div>`;
  }

  private row(r: Row, i: number) {
    const shade = i % 2 === 0 ? 'shade' : '';
    if (r.type === 'balance') {
      return html`<div class="trow ${shade}">
        <div class="first">${balIcon()}<span>${r.id}</span></div>
        <div>${r.time ?? nothing}</div>
        <div>${r.type}</div>
        <div class="wide" style="grid-column: span 9">${r.note}</div>
        <div>${r.profit ?? nothing}</div>
      </div>`;
    }
    return html`<div class="trow ${shade}">
      <div class="first">${docIcon(!!r.blue)}<span>${r.id}</span></div>
      <div></div>
      <div>${r.type}</div>
      <div>10.00</div>
      <div>${r.sym}</div>
      <div>${r.p1 ?? nothing}</div>
      <div>0.00</div>
      <div>0.00</div>
      <div>${r.t2 ?? nothing}</div>
      <div>${r.p2 ?? nothing}</div>
      <div>0.00</div>
      <div>0.00</div>
      <div>${r.profit ?? nothing}</div>
    </div>`;
  }

  private watermark() {
    const marks = [];
    for (let r = 0; r < 6; r++) {
      for (let c = 0; c < 8; c++) {
        const x = 1443 - 300 * 4 + c * 300 - 6 * r;
        const y = 40 + r * 187;
        marks.push(svg`<text transform="translate(${x + 30} ${y + 18}) rotate(-35)" text-anchor="end">FX110网</text>`);
      }
    }
    return html`<svg class="wm" width="1920" height="1010">${marks}</svg>`;
  }

  render() {
    return html`
      <div class="window">
        <div class="accent"></div>
        <div class="title">
          ${ic(20, 22, svg`
            <path d="M3 3l13 16" stroke="#e8483f" stroke-width="3.4"/>
            <path d="M16 3L3 19" stroke="#9aa3ad" stroke-width="3.4"/>
            <path d="M16 3l-5 6" stroke="#e8483f" stroke-width="3.4"/>`)}
          <span class="name">56004802: FPMarkets-Live - FP Markets LLC - [XAUUSD,M1]</span>
          <div class="caps">
            ${ic(16, 16, svg`<path d="M0 8h15" stroke="#000" stroke-width="1.2"/>`)}
            ${ic(16, 16, svg`<rect x="1" y="1" width="14" height="14" rx="2" fill="none" stroke="#000" stroke-width="1.2"/>`)}
            ${ic(16, 16, svg`<path d="M1 1l14 14M15 1L1 15" stroke="#000" stroke-width="1.2"/>`)}
          </div>
        </div>
        <div class="menu">
          <div class="logo">${icons.orbex()}</div>
          ${MENU.map(([a, k, b, w]) => html`<span style="width:${w}px">${a}<u>${k}</u>${b}</span>`)}
          <div class="mdi">
            <i>${ic(10, 10, svg`<path d="M2 7h6" stroke="#67768a" stroke-width="2"/>`)}</i>
            <i>${ic(12, 12, svg`<path d="M4 1h7v6M1 4h6v7H1z" fill="none" stroke="#67768a" stroke-width="1.3"/>`)}</i>
            <i>${ic(10, 10, svg`<path d="M1 1l8 8M9 1L1 9" stroke="#67768a" stroke-width="2"/>`)}</i>
          </div>
        </div>
        <div class="tb">
          ${this.toolbar(TB1)}
          <div class="end" style="left:1210px"></div>
          <div class="right-tools">${icons.search()}${icons.chat()}</div>
        </div>
        <div class="tb">
          ${this.toolbar(TB2)}
          <div class="end" style="left:820px"></div>
        </div>
        <div class="panels">
          <div class="pane mw">
            <div class="pane-head">
              <div class="pane-title">市场报价: 07:24:21</div>
              <div class="pane-x">${closeX()}</div>
            </div>
            <div class="pane-body">
              <div class="mw-row">
                <div>交易品种</div><div>卖价</div><div>买价</div><div>!</div><div>最高</div><div>最低</div>
              </div>
              <div class="mw-row sel">
                <div>${ic(18, 18, svg`<path d="M9 16L1 8h4V3h8v5h4z" fill="#ef5a24" stroke="#a63a12" stroke-width=".8"/>`)}<span>XAUUSD</span></div>
                <div>1785.80</div><div>1785.98</div><div>18</div><div>1790.54</div><div>1783.16</div>
              </div>
            </div>
            <div class="ptabs">
              <div class="ptab active" style="width:102px">交易品种</div>
              <div class="ptab" style="width:84px">即时图</div>
            </div>
          </div>
          <div class="pane nav">
            <div class="pane-head">
              <div class="pane-title">导航</div>
              <div class="pane-x">${closeX()}</div>
            </div>
            <div class="pane-body">
              <div class="tree-row lv0"><div class="ti">${icons.orbex()}</div>Orbex Global</div>
              <div class="tree-row lv1"><div class="ti">${icons.people()}</div>账户</div>
              <div class="tree-row lv2"><div class="ti">${icons.server()}</div>FPMarkets-Live</div>
              <div class="tree-row lv3"><div class="ti">${icons.person()}</div>56004802: MeiJuan Xu</div>
              <div class="tree-row lv1"><div class="ti">${icons.person()}</div></div>
              <svg class="tree-lines" width="300" height="109">
                <g stroke="#777" stroke-dasharray="1 2" fill="none">
                  <path d="M17.5 26V109M30 41.5H34M47.5 53V59M60 67.5H66M77.5 78V93.5H98"></path>
                </g>
                <g fill="#e6e8ec" stroke="#8c8c8c">
                  <rect x="11.5" y="35.5" width="12" height="12"></rect>
                  <rect x="41.5" y="61.5" width="12" height="12"></rect>
                </g>
                <path d="M14 41.5h7M44 67.5h7" stroke="#3a5f94"></path>
              </svg>
              <div class="vscroll"><i></i></div>
            </div>
            <div class="ptabs">
              <div class="ptab active" style="width:68px">常用</div>
              <div class="ptab" style="width:84px">收藏夹</div>
            </div>
          </div>
          ${this.chart()}
        </div>
        <div class="term">
          <div class="side">
            <div class="x">${closeX()}</div>
            <div class="strip"><span>终端</span></div>
          </div>
          <div class="main">
            <div class="upper">
              <div class="table">
                <div class="trow head">
                  ${HEAD.map((h, i) => html`<div class=${i === 0 ? 'first' : ''}>${h}${i === 8 ? html`<span class="sort">/</span>` : nothing}</div>`)}
                </div>
                ${ROWS.map((r, i) => this.row(r, i))}
                <div class="sum">
                  <span class="dot"></span><span>盈/亏: 23 770.00  信用额: 0.00  存款: 9 005.00  取款: -32 775.00</span>
                  <span class="total">0.00</span>
                </div>
                <div class="gap"></div>
              </div>
              <div class="scroll"><i></i></div>
            </div>
            <div class="btabs">
              ${TABS.map((t) => html`<div class="btab ${t.active ? 'active' : ''}" style="width:${t.w}px">
                ${t.label}${t.badge ? html`<b>${t.badge}</b>` : nothing}
              </div>`)}
            </div>
          </div>
        </div>
        <div class="status">
          ${STATUS_W.map((w, i) => html`<div style="width:${w}px">
            ${i === 0 ? '寻求帮助,请按F1键' : i === 1 ? 'Default' : nothing}
            ${i === 8 ? html`<span class="conn">${ic(40, 16, svg`
              <g stroke-width="2.4">
                ${[0, 1, 2, 3, 4, 5, 6, 7, 8, 9].map((k) => svg`
                  <line x1=${k * 4 + 1} x2=${k * 4 + 1} y1="0" y2="9" stroke="#6f8a12"></line>
                  <line x1=${k * 4 + 1} x2=${k * 4 + 1} y1=${k > 4 ? 9 : 13} y2="16" stroke="#1d5f7a"></line>`)}
              </g>`)}</span><span>773/44 kb</span>` : nothing}
          </div>`)}
        </div>
      </div>
      <div class="mask m1"></div>
      <div class="mask m2"></div>
      <div class="mask m3"></div>
      <div class="mask m4"></div>
      ${this.watermark()}
    `;
  }
}
